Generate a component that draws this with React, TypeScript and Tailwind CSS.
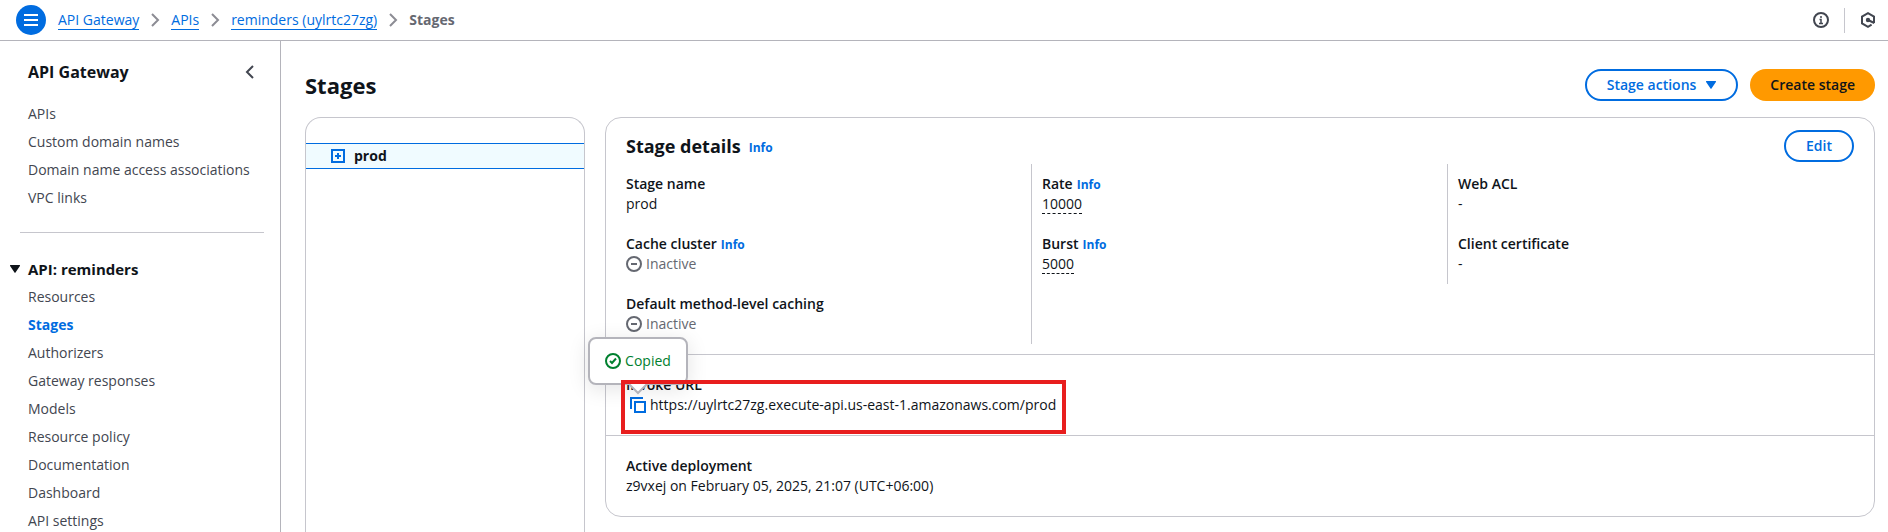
import React from "react";

const apiLinks = ["APIs", "Custom domain names", "Domain name access associations", "VPC links"];

const reminderLinks = [
  "Resources",
  "Stages",
  "Authorizers",
  "Gateway responses",
  "Models",
  "Resource policy",
  "Documentation",
  "Dashboard",
  "API settings",
];

const crumbs = ["API Gateway", "APIs", "reminders (uylrtc27zg)"];

function ChevronRight() {
  return (
    <svg viewBox="0 0 16 16" className="size-4 shrink-0" fill="none" stroke="#8c8c94" strokeWidth="2" aria-hidden="true">
      <path d="M5 2l6 6-6 6" />
    </svg>
  );
}

function Caret({ className }: { className: string }) {
  return (
    <svg viewBox="0 0 10 8" className={className} fill="currentColor" aria-hidden="true">
      <path d="M0.6 0h8.8c.5 0 .8.5.5.9L5.5 7.6a.6.6 0 0 1-1 0L.1.9C-.2.5.1 0 .6 0z" />
    </svg>
  );
}

function InfoLink() {
  return (
    <a href="#info" className="text-xs font-bold text-[#006ce0]">
      Info
    </a>
  );
}

function Field({ label, info, children }: { label: string; info?: boolean; children: React.ReactNode }) {
  return (
    <div className="px-2.5 py-2.5">
      <dt className="flex items-baseline gap-1 font-semibold">
        {label}
        {info && <InfoLink />}
      </dt>
      <dd className="flex">{children}</dd>
    </div>
  );
}

function Inactive() {
  return (
    <span className="flex items-center gap-1 text-[#656871]">
      <svg viewBox="0 0 16 16" className="size-4" fill="none" stroke="currentColor" strokeWidth="2" aria-hidden="true">
        <circle cx="8" cy="8" r="7" />
        <path d="M5 8h6" />
      </svg>
      Inactive
    </span>
  );
}

function NavList({ items }: { items: string[] }) {
  return (
    <ul className="flex flex-col gap-2">
      {items.map((item) => (
        <li key={item}>
          <a
            href="#nav"
            className={item === "Stages" ? "block font-bold text-[#006ce0]" : "block text-[#424650]"}
          >
            {item}
          </a>
        </li>
      ))}
    </ul>
  );
}

export default function App() {
  return (
    <div className="flex min-h-screen flex-col bg-white font-['Open_Sans','Noto_Sans',sans-serif] text-[14px] leading-5 text-[#0f141a]">
      <header className="flex h-[41px] shrink-0 items-center border-b border-[#b4b4bb] pr-3 pl-4">
        <button type="button" aria-label="Menu" className="flex size-[30px] items-center justify-center rounded-full bg-[#006ce0]">
          <svg viewBox="0 0 16 16" className="size-4" fill="none" stroke="#fff" strokeWidth="2" aria-hidden="true">
            <path d="M1 3h14M1 8h14M1 13h14" />
          </svg>
        </button>
        <nav aria-label="Breadcrumb" className="ml-3 flex items-center gap-2">
          {crumbs.map((crumb) => (
            <React.Fragment key={crumb}>
              <a href="#crumb" className="border-b border-[#006ce0] leading-[18px] text-[#006ce0]">
                {crumb}
              </a>
              <ChevronRight />
            </React.Fragment>
          ))}
          <span className="font-bold text-[#656871]">Stages</span>
        </nav>
        <div className="ml-auto flex items-center gap-[15px] text-[#424650]">
          <button type="button" aria-label="Information">
            <svg viewBox="0 0 16 16" className="size-4" fill="none" stroke="currentColor" strokeWidth="2" aria-hidden="true">
              <circle cx="8" cy="8" r="7" />
              <path d="M7 5h2M6.5 7.5H8V11M6 11.5h4" strokeWidth="1.5" />
            </svg>
          </button>
          <span className="h-[25px] w-px bg-[#c6c6cd]" />
          <button type="button" aria-label="Settings">
            <svg viewBox="0 0 16 16" className="size-4" fill="none" stroke="currentColor" strokeWidth="2" aria-hidden="true">
              <path d="M14 11V4.6L8 1.2 2 4.6v6.8l6 3.4 3.6-2.1" />
              <path d="M8 8l6.3 3" />
              <circle cx="8" cy="8" r="1.2" fill="currentColor" />
            </svg>
          </button>
        </div>
      </header>

      <div className="flex flex-1">
        <aside className="w-[281px] shrink-0 border-r border-[#b4b4bb]">
          <div className="flex items-center justify-between pt-[19px] pr-[22px] pl-7">
            <h2 className="text-base leading-6 font-bold">API Gateway</h2>
            <button type="button" aria-label="Collapse navigation" className="text-[#424650]">
              <svg viewBox="0 0 16 16" className="size-4" fill="none" stroke="currentColor" strokeWidth="2" aria-hidden="true">
                <path d="M11 2L5 8l6 6" />
              </svg>
            </button>
          </div>
          <nav aria-label="API Gateway" className="pt-5 pl-7">
            <NavList items={apiLinks} />
          </nav>
          <hr className="mt-6 mr-4 ml-5 border-[#c6c6cd]" />
          <button type="button" className="mt-6 flex items-center gap-2 pl-2.5 text-[15px] leading-6 font-bold">
            <Caret className="h-2 w-2.5" />
            API: reminders
          </button>
          <nav aria-label="API: reminders" className="pt-1.5 pl-7">
            <NavList items={reminderLinks} />
          </nav>
        </aside>

        <main className="flex min-w-0 flex-1 flex-col pt-7 pr-[13px] pl-6">
          <div className="flex items-center">
            <h1 className="mr-auto text-[22px] leading-8 font-bold">Stages</h1>
            <button type="button" className="flex h-8 items-center gap-2.5 rounded-full border-2 border-[#006ce0] px-5 font-semibold text-[#006ce0]">
              Stage actions
              <Caret className="h-2 w-2.5" />
            </button>
            <button type="button" className="ml-3 h-8 rounded-full bg-[#ff9900] px-5 font-semibold">
              Create stage
            </button>
          </div>

          <div className="mt-4 flex flex-1 gap-5">
            <section aria-label="Stage list" className="w-[280px] shrink-0 rounded-t-2xl border border-b-0 border-[#c6c6cd] pt-[25px]">
              <div className="flex h-[26px] items-center gap-[9px] border-y border-[#006ce0] bg-[#f0fbff] pl-[25px] font-bold">
                <button type="button" aria-label="Expand prod" className="text-[#006ce0]">
                  <svg viewBox="0 0 14 14" className="size-3.5" fill="none" stroke="currentColor" strokeWidth="2" aria-hidden="true">
                    <path d="M1 1h12v12H1zM4 7h6M7 4v6" />
                  </svg>
                </button>
                prod
              </div>
            </section>

            <section aria-label="Stage details" className="min-w-0 flex-1 self-start rounded-2xl border border-[#c6c6cd]">
              <div className="flex h-[46px] items-center px-5 pt-2.5">
                <h2 className="mr-2 text-lg leading-6 font-bold">Stage details</h2>
                <span className="flex pt-1">
                  <InfoLink />
                </span>
                <button type="button" className="ml-auto h-8 rounded-full border-2 border-[#006ce0] px-5 font-semibold text-[#006ce0]">
                  Edit
                </button>
              </div>

              <div className="grid grid-cols-3 items-start px-2.5 pb-2.5">
                <dl className="border-r border-[#c6c6cd]">
                  <Field label="Stage name">prod</Field>
                  <Field label="Cache cluster" info>
                    <Inactive />
                  </Field>
                  <Field label="Default method-level caching">
                    <Inactive />
                  </Field>
                </dl>
                <dl className="border-r border-[#c6c6cd]">
                  <Field label="Rate" info>
                    <span className="border-b border-dashed border-[#0f141a] leading-[19px]">10000</span>
                  </Field>
                  <Field label="Burst" info>
                    <span className="border-b border-dashed border-[#0f141a] leading-[19px]">5000</span>
                  </Field>
                </dl>
                <dl>
                  <Field label="Web ACL">-</Field>
                  <Field label="Client certificate">-</Field>
                </dl>
              </div>

              <div className="relative border-t border-[#c6c6cd] p-5">
                <h3 className="font-semibold">Invoke URL</h3>
                <div className="flex items-center gap-1 pl-1">
                  <span className="relative flex">
                    <button type="button" aria-label="Copy invoke URL" className="text-[#006ce0]">
                      <svg viewBox="0 0 16 16" className="size-4" fill="none" stroke="currentColor" strokeWidth="2" aria-hidden="true">
                        <path d="M5 5h10v10H5zM1 12V1h12" />
                      </svg>
                    </button>
                    <span
                      role="status"
                      className="absolute bottom-7 left-1/2 flex h-12 w-[100px] -translate-x-1/2 items-center justify-center gap-1 rounded-lg border-2 border-[#b4b4bb] bg-white text-[#00802f] shadow-[0_4px_20px_1px_rgba(0,7,22,0.1)]"
                    >
                      <svg viewBox="0 0 16 16" className="size-4" fill="none" stroke="currentColor" strokeWidth="2" aria-hidden="true">
                        <circle cx="8" cy="8" r="7" />
                        <path d="M5 8l2 2 4-4.5" />
                      </svg>
                      Copied
                      <svg viewBox="0 0 20 12" className="absolute top-full left-1/2 h-3 w-5 -translate-x-1/2" aria-hidden="true">
                        <path d="M0 0h20L10 10z" fill="#fff" />
                        <path d="M1 1l9 9 9-9" fill="none" stroke="#b4b4bb" strokeWidth="2" />
                      </svg>
                    </span>
                  </span>
                  https://uylrtc27zg.execute-api.us-east-1.amazonaws.com/prod
                </div>
                <span className="pointer-events-none absolute top-[25px] left-[15px] h-[54px] w-[445px] border-4 border-[#e81e1e]" />
              </div>

              <div className="border-t border-[#c6c6cd] p-5">
                <h3 className="font-semibold">Active deployment</h3>
                <p>z9vxej on February 05, 2025, 21:07 (UTC+06:00)</p>
              </div>
            </section>
          </div>
        </main>
      </div>
    </div>
  );
}
